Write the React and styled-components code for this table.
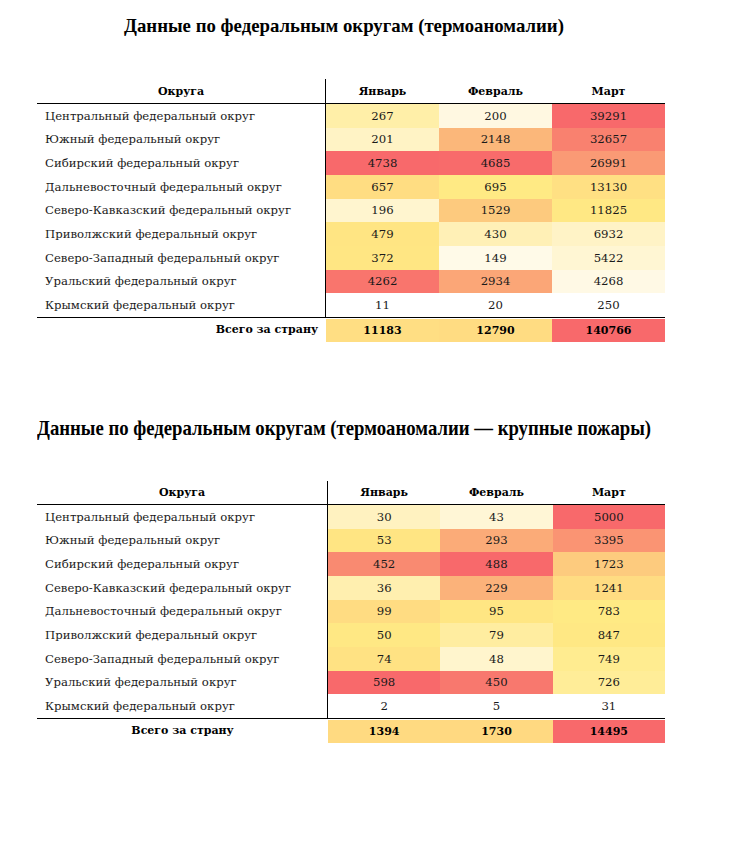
import React from 'react'
import styled, { createGlobalStyle } from 'styled-components'

const GlobalStyle = createGlobalStyle`
  body {
    margin: 0;
    background: #ffffff;
  }
`

const thermo = {
  title: 'Данные по федеральным округам (термоаномалии)',
  indent: 87,
  condensed: false,
  nameWidth: 289,
  headHeight: 24,
  totalAlign: 'right',
  rows: [
    ['Центральный федеральный округ', [267, '#FFEFA8'], [200, '#FFF8E1'], [39291, '#F8696B']],
    ['Южный федеральный округ', [201, '#FFF3C5'], [2148, '#FBB77A'], [32657, '#F9816F']],
    ['Сибирский федеральный округ', [4738, '#F8696B'], [4685, '#F86B6B'], [26991, '#FA9A75']],
    ['Дальневосточный федеральный округ', [657, '#FFDD82'], [695, '#FFEA84'], [13130, '#FFE083']],
    ['Северо-Кавказский федеральный округ', [196, '#FFF5CF'], [1529, '#FDCA7E'], [11825, '#FFE884']],
    ['Приволжский федеральный округ', [479, '#FFE583'], [430, '#FFF0B6'], [6932, '#FFF3C6']],
    ['Северо-Западный федеральный округ', [372, '#FFE683'], [149, '#FFFAE8'], [5422, '#FFF6D3']],
    ['Уральский федеральный округ', [4262, '#F9756D'], [2934, '#FBA677'], [4268, '#FFF9E5']],
    ['Крымский федеральный округ', [11, '#FFFFFF'], [20, '#FFFFFF'], [250, '#FFFFFF']],
  ],
  total: [[11183, '#FFDE83'], [12790, '#FFDC82'], [140766, '#F8696B']],
}

const fires = {
  title: 'Данные по федеральным округам (термоаномалии — крупные пожары)',
  indent: 0,
  condensed: true,
  nameWidth: 291,
  headHeight: 23,
  totalAlign: 'center',
  rows: [
    ['Центральный федеральный округ', [30, '#FFF2C0'], [43, '#FFF6D6'], [5000, '#F8696B']],
    ['Южный федеральный округ', [53, '#FFE583'], [293, '#FBAB78'], [3395, '#FA9473']],
    ['Сибирский федеральный округ', [452, '#F98A71'], [488, '#F8696B'], [1723, '#FDCB7E']],
    ['Северо-Кавказский федеральный округ', [36, '#FFEFAF'], [229, '#FBB27A'], [1241, '#FFDC82']],
    ['Дальневосточный федеральный округ', [99, '#FFDC82'], [95, '#FFE683'], [783, '#FFEA84']],
    ['Приволжский федеральный округ', [50, '#FFE884'], [79, '#FFEDA0'], [847, '#FFE884']],
    ['Северо-Западный федеральный округ', [74, '#FFE283'], [48, '#FFF5CD'], [749, '#FFEC90']],
    ['Уральский федеральный округ', [598, '#F8696B'], [450, '#F8786E'], [726, '#FFED98']],
    ['Крымский федеральный округ', [2, '#FFFFFF'], [5, '#FFFFFF'], [31, '#FFFFFF']],
  ],
  total: [[1394, '#FFDA81'], [1730, '#FFD981'], [14495, '#F8696B']],
}

const months = ['Январь', 'Февраль', 'Март']

const DistrictTable = ({ data }) => (
  <Section>
    <Title $indent={data.indent} $condensed={data.condensed}>
      {data.title}
    </Title>
    <Grid $nameWidth={data.nameWidth}>
      <HeadName $h={data.headHeight}>Округа</HeadName>
      {months.map(m => (
        <HeadCell key={m} $h={data.headHeight}>
          {m}
        </HeadCell>
      ))}
      {data.rows.map(([name, ...values]) => (
        <React.Fragment key={name}>
          <NameCell>{name}</NameCell>
          {values.map(([v, color], i) => (
            <ValueCell key={i} $bg={color}>
              {v}
            </ValueCell>
          ))}
        </React.Fragment>
      ))}
      <TotalLabel $align={data.totalAlign}>Всего за страну</TotalLabel>
      {data.total.map(([v, color], i) => (
        <TotalCell key={i} $bg={color}>
          {v}
        </TotalCell>
      ))}
    </Grid>
  </Section>
)

const App = () => (
  <Page>
    <GlobalStyle />
    <DistrictTable data={thermo} />
    <DistrictTable data={fires} />
  </Page>
)

export default App

const Page = styled.main`
  padding: 14px 0 0 37px;
  width: 707px;
  font-family: 'DejaVu Serif', 'Liberation Serif', serif;
  color: #1a1a1a;
  display: flex;
  flex-direction: column;
  gap: 74px;
`

const Section = styled.section`
  display: flex;
  flex-direction: column;
  gap: 41px;
`

const Title = styled.h2`
  margin: 0 0 0 ${p => p.$indent}px;
  font-family: 'Liberation Serif', 'Times New Roman', serif;
  font-weight: bold;
  font-size: ${p => (p.$condensed ? '21px' : '18.8px')};
  line-height: 24px;
  height: 24px;
  white-space: nowrap;
  color: #000;
  transform-origin: left center;
  transform: ${p => (p.$condensed ? 'scaleX(0.892)' : 'none')};
`

const Grid = styled.div`
  display: grid;
  grid-template-columns: ${p => p.$nameWidth}px repeat(3, 1fr);
  width: 628px;
  font-size: 11.7px;
`

const HeadName = styled.div`
  height: ${p => p.$h}px;
  display: flex;
  align-items: center;
  justify-content: center;
  font-weight: bold;
  font-size: 11px;
  color: #000;
  border-right: 1px solid #000;
  border-bottom: 1px solid #000;
`

const HeadCell = styled.div`
  height: ${p => p.$h}px;
  display: flex;
  align-items: center;
  justify-content: center;
  font-weight: bold;
  font-size: 11px;
  color: #000;
  border-bottom: 1px solid #000;
`

const NameCell = styled.div`
  height: 23.67px;
  display: flex;
  align-items: center;
  padding-left: 8px;
  white-space: nowrap;
  border-right: 1px solid #000;
`

const ValueCell = styled.div`
  height: 23.67px;
  display: flex;
  align-items: center;
  justify-content: center;
  background: ${p => p.$bg};
`

const TotalLabel = styled.div`
  height: 23px;
  display: flex;
  align-items: center;
  justify-content: ${p => (p.$align === 'right' ? 'flex-end' : 'center')};
  padding-right: ${p => (p.$align === 'right' ? '8px' : '0')};
  font-weight: bold;
  font-size: 11px;
  color: #000;
  border-top: 1px solid #000;
`

const TotalCell = styled.div`
  height: 23px;
  display: flex;
  align-items: center;
  justify-content: center;
  font-weight: bold;
  font-size: 11px;
  color: #000;
  border-top: 1px solid #000;
  background: ${p => p.$bg};
  background-clip: content-box;
  padding-top: 1px;
`
